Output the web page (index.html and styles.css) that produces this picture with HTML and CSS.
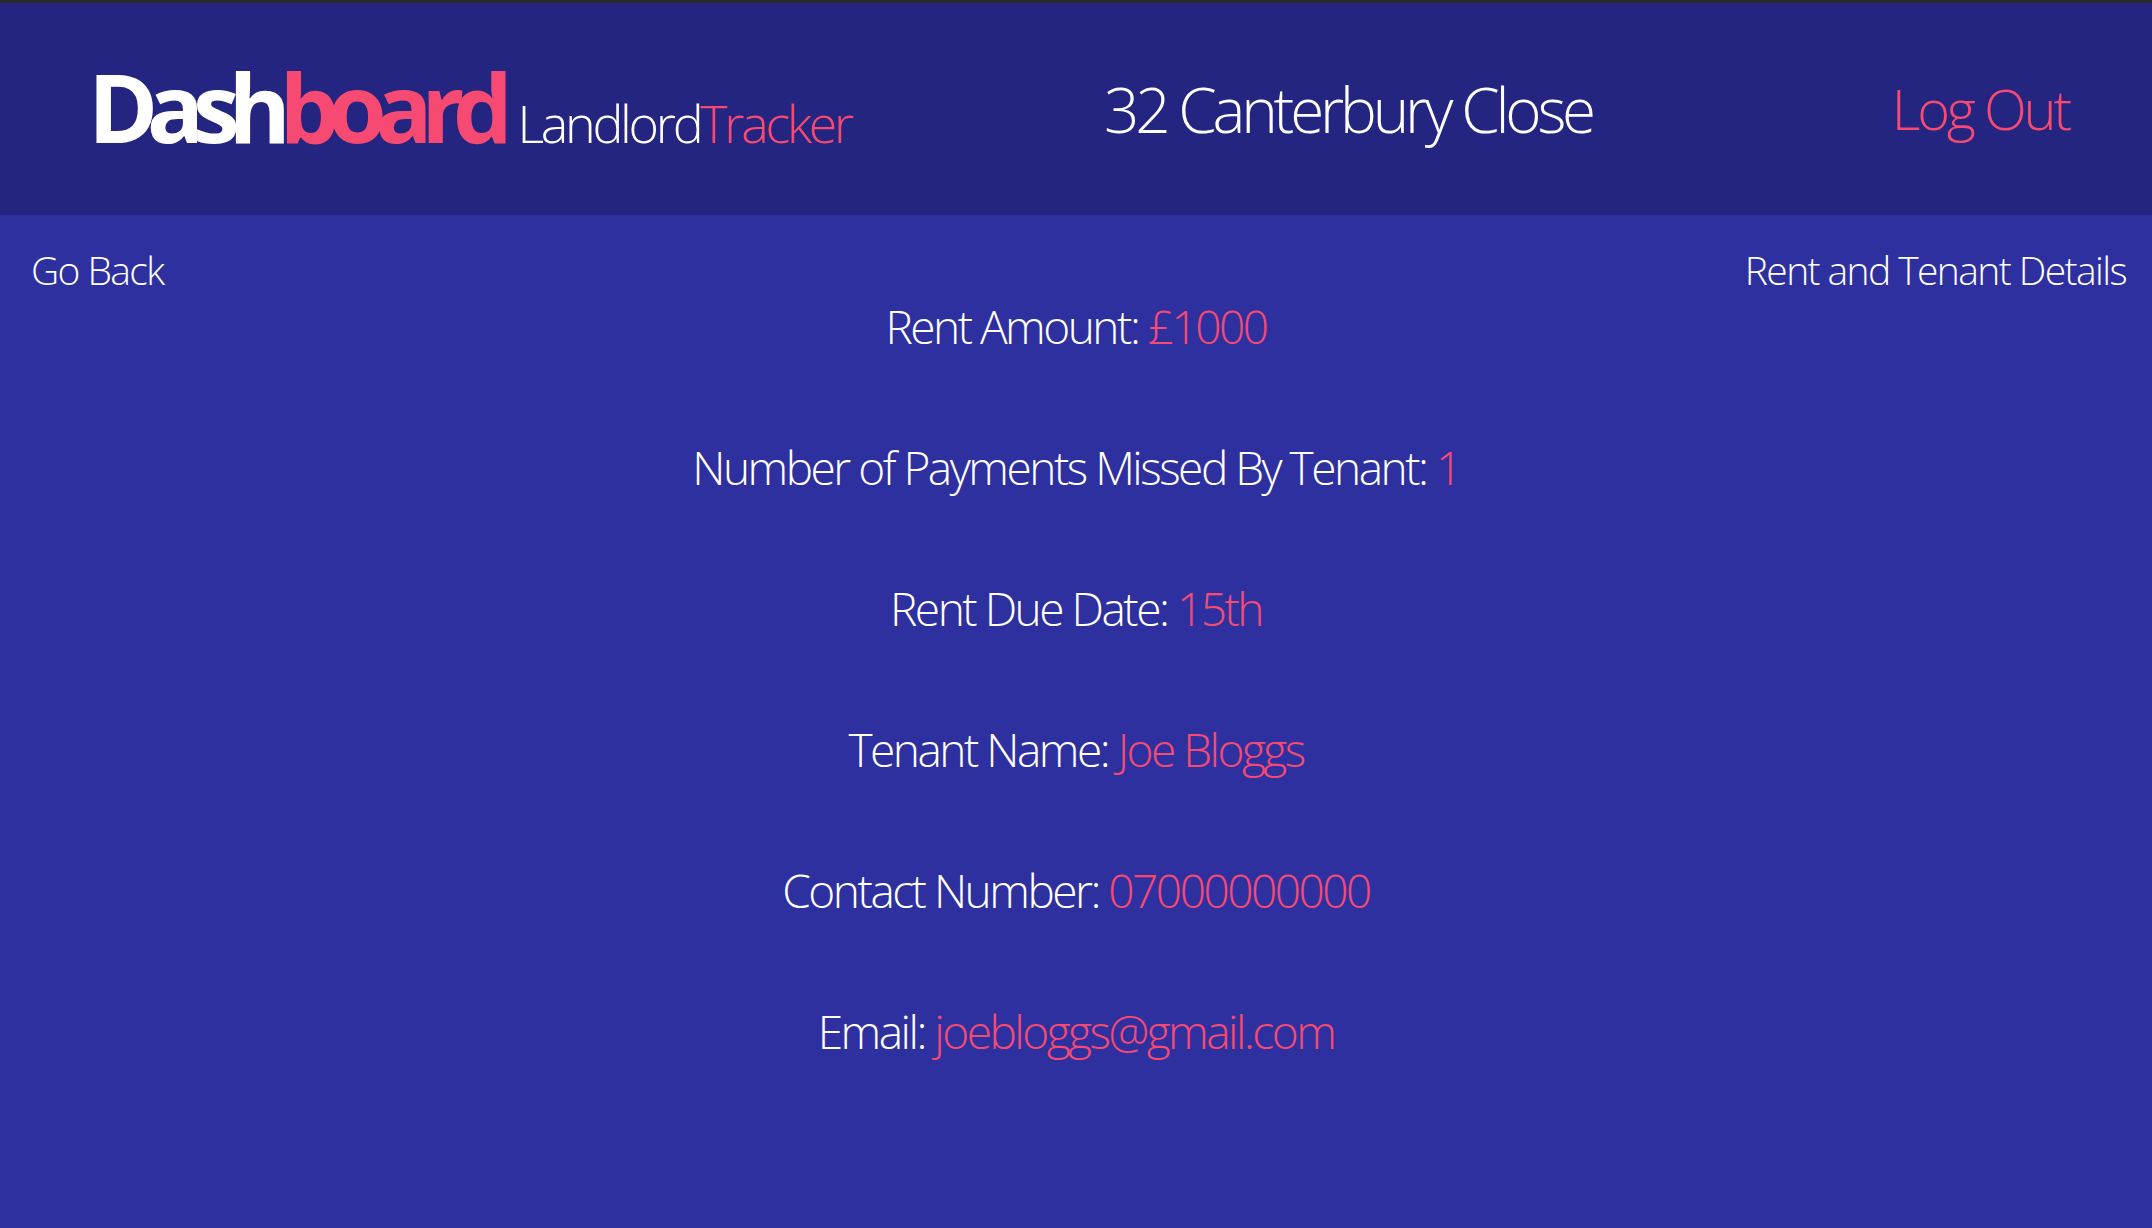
FILE: index.html
```html
<!DOCTYPE html>
<html lang="en">
<head>
<meta charset="utf-8">
<title>32 Canterbury Close - LandlordTracker</title>
<link rel="stylesheet" href="styles.css">
</head>
<body>
<header class="topbar">
  <div class="brand">
    <span class="brand-main">Dash<span class="accent">board</span></span>
    <span class="brand-sub">Landlord<span class="accent">Tracker</span></span>
  </div>
  <h1 class="page-title">32 Canterbury Close</h1>
  <a class="logout" href="#">Log Out</a>
</header>
<main class="content">
  <nav class="subnav">
    <a class="back" href="#">Go Back</a>
    <span class="section-name">Rent and Tenant Details</span>
  </nav>
  <section class="details">
    <p class="row">Rent Amount: <span class="accent">£1000</span></p>
    <p class="row">Number of Payments Missed By Tenant: <span class="accent">1</span></p>
    <p class="row">Rent Due Date: <span class="accent">15th</span></p>
    <p class="row">Tenant Name: <span class="accent">Joe Bloggs</span></p>
    <p class="row">Contact Number: <span class="accent">07000000000</span></p>
    <p class="row">Email: <span class="accent">joebloggs@gmail.com</span></p>
  </section>
</main>
</body>
</html>
```
FILE: styles.css
```css
html, body {
  margin: 0;
  padding: 0;
}
body {
  min-height: 1228px;
  background: #2f30a0;
  color: #ffffff;
  font-family: "Open Sans", "Noto Sans", sans-serif;
  font-weight: 300;
  border-top: 3px solid #2a2a30;
  box-sizing: border-box;
}
a {
  color: inherit;
  text-decoration: none;
}
.accent {
  color: #f64a72;
}
.topbar {
  height: 212px;
  background: #232580;
  display: flex;
  align-items: center;
  padding: 0 83px 0 88px;
  box-sizing: border-box;
}
.brand {
  width: 760px;
  flex: none;
  display: flex;
  align-items: baseline;
  gap: 16px;
  padding-bottom: 6px;
}
.brand-main {
  font-weight: 700;
  font-size: 95px;
  letter-spacing: -11.5px;
  line-height: 1;
}
.brand-sub {
  font-size: 52px;
  letter-spacing: -3.3px;
  line-height: 1;
}
.page-title {
  margin: 0 0 0 256px;
  font-size: 62px;
  font-weight: 300;
  letter-spacing: -4.2px;
  line-height: 1;
}
.logout {
  margin-left: auto;
  font-size: 56px;
  color: #f64a72;
  letter-spacing: -3.2px;
  line-height: 1;
  padding-bottom: 2px;
}
.subnav {
  display: flex;
  justify-content: space-between;
  padding: 0 26px 0 31px;
  margin-top: 30px;
  font-size: 39px;
  line-height: 50px;
  letter-spacing: -1.6px;
}
.details {
  display: flex;
  flex-direction: column;
  align-items: center;
  gap: 79px;
}
.row {
  margin: 0;
  font-size: 46px;
  line-height: 62px;
  letter-spacing: -2.5px;
  white-space: nowrap;
}
```
